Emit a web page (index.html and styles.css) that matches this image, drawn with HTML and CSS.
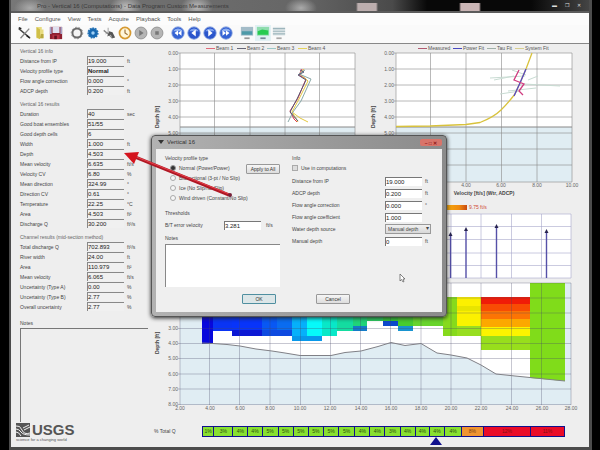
FILE: index.html
```html
<!DOCTYPE html>
<html lang="en">
<head>
<meta charset="utf-8">
<title>Vertical 16</title>
<link rel="stylesheet" href="styles.css">
</head>
<body>
<div class="window">
  <header class="titlebar">
    <span class="title">Pro - Vertical 16 (Computations) - Data Program Custom Measurements</span>
    <span class="caption"><button aria-label="Minimize">&#9644;</button><button aria-label="Restore">&#10064;</button><button aria-label="Close">&#10005;</button></span>
  </header>
  <nav class="menu">
    <a href="#">File</a><a href="#">Configure</a><a href="#">View</a><a href="#">Tests</a><a href="#">Acquire</a><a href="#">Playback</a><a href="#">Tools</a><a href="#">Help</a>
  </nav>
  <div class="toolbar">
    <div class="group">
      <button aria-label="Wizard"><svg viewBox="0 0 16 16"><path d="M2 3l12 10" stroke="#444" stroke-width="1.5"/><path d="M14 3L4 14" stroke="#888" stroke-width="1.6"/><path d="M2 2l3 1M11 11l4 3" stroke="#222" stroke-width="1.6"/></svg></button>
      <button aria-label="Open"><svg viewBox="0 0 16 16"><path d="M4 1h6v3h2v10H4z" fill="#e8dc80"/><path d="M4 1l4 3v11l-4-2z" fill="#d0bf48"/><path d="M9 9h3v5H8z" fill="#b9a93f"/></svg></button>
      <button aria-label="Save"><svg viewBox="0 0 16 16"><path d="M1 1h14v14H1z" fill="#8e1f30"/><path d="M4 1h8v7H4z" fill="#dfe0f0"/><path d="M1 1h2v8H1zM13 1h2v8h-2z" fill="#a8a4c8"/><path d="M4 10h8v5H4z" fill="#b83346"/><path d="M6 11h3v4H6z" fill="#601020"/></svg></button>
    </div>
    <div class="group">
      <button aria-label="Settings"><svg viewBox="0 0 16 16"><circle cx="8" cy="8" r="5.2" fill="#f4f4f4" stroke="#6a6a6a" stroke-width="2.2"/><circle cx="8" cy="8" r="6.6" fill="none" stroke="#888" stroke-width="1" stroke-dasharray="2 2"/></svg></button>
      <button aria-label="Instrument"><svg viewBox="0 0 16 16"><circle cx="8" cy="8" r="5.4" fill="#1768b0" stroke="#2472b5" stroke-width="2" stroke-dasharray="2 1"/><circle cx="8" cy="8" r="2" fill="#9fd0f5"/></svg></button>
      <button aria-label="Calibrate"><svg viewBox="0 0 16 16"><path d="M2 5l5 4 5 5" stroke="#888" stroke-width="1.5" fill="none"/><path d="M8 6l4 1 3 6-3 1-2-4-4 2z" fill="#555"/><path d="M7 2v5M4 9l3-2" stroke="#9a9a9a"/></svg></button>
      <button aria-label="Clock"><svg viewBox="0 0 16 16"><circle cx="8" cy="8" r="6.3" fill="#fff6da" stroke="#d69a32" stroke-width="2"/><path d="M8 4v4l3 2" stroke="#997038" fill="none" stroke-width="1.3"/></svg></button>
      <button aria-label="Start"><svg viewBox="0 0 16 16"><circle cx="8" cy="8" r="6.8" fill="#b5b5b5" stroke="#909090"/><path d="M6 4.500l5 3.500-5 3.500z" fill="#777"/></svg></button>
      <button aria-label="Stop"><svg viewBox="0 0 16 16"><circle cx="8" cy="8" r="6.800" fill="#b5b5b5" stroke="#909090"/><path d="M6 6h4v4H6z" fill="#777"/></svg></button>
    </div>
    <div class="group">
      <button aria-label="First"><svg viewBox="0 0 16 16"><circle cx="8" cy="8" r="7" fill="#3563d4" stroke="#6f8fd8"/><path d="M2.500 6a6 5 0 0 1 11 0z" fill="#8fb0f2"/><path d="M8 5v6L4 8zM12 5v6L8 8z" fill="#fff"/></svg></button>
      <button aria-label="Previous"><svg viewBox="0 0 16 16"><circle cx="8" cy="8" r="7" fill="#2a55cc" stroke="#6f8fd8"/><path d="M2.500 6a6 5 0 0 1 11 0z" fill="#7fa2ee"/><path d="M10 4v8L5 8z" fill="#fff"/></svg></button>
      <button aria-label="Next"><svg viewBox="0 0 16 16"><circle cx="8" cy="8" r="7" fill="#2a55cc" stroke="#6f8fd8"/><path d="M2.500 6a6 5 0 0 1 11 0z" fill="#7fa2ee"/><path d="M6 4v8l5-4z" fill="#fff"/></svg></button>
      <button aria-label="Last"><svg viewBox="0 0 16 16"><circle cx="8" cy="8" r="7" fill="#3563d4" stroke="#6f8fd8"/><path d="M2.500 6a6 5 0 0 1 11 0z" fill="#8fb0f2"/><path d="M4 5v6l4-3zM8 5v6l4-3z" fill="#fff"/></svg></button>
    </div>
    <div class="group">
      <button aria-label="Profile view"><svg viewBox="0 0 16 16"><path d="M1 1h14v10H1z" fill="#a3bcc8"/><path d="M2 6h12v4H2z" fill="#4e9aa8"/><path d="M5 13h6v2H5z" fill="#999"/></svg></button>
      <button class="on" aria-label="Contour view"><svg viewBox="0 0 16 16"><path d="M1 1h14v10H1z" fill="#8fdcae"/><path d="M2 6l5-2 7 1v5H2z" fill="#27cb50"/><path d="M5 13h6v2H5z" fill="#789"/></svg></button>
      <button aria-label="Table view"><svg viewBox="0 0 16 16"><path d="M1 1h14v10H1z" fill="#e1e8ea"/><path d="M1 3h14M1 6h14M1 9h14" stroke="#9db5bc" stroke-width="1.400"/><path d="M5 13h6v2H5z" fill="#aaa"/></svg></button>
    </div>
  </div>
  <main class="main">
    <aside class="side">
      <h2>Vertical 16 info</h2>
      <div class="rows">
        <label for="a1">Distance from IP</label><input id="a1" value="19.000"><span>ft</span>
        <label for="a2">Velocity profile type</label><input id="a2" class="strong" value="Normal"><span></span>
        <label for="a3">Flow angle correction</label><input id="a3" value="0.000"><span>°</span>
        <label for="a4">ADCP depth</label><input id="a4" value="0.200"><span>ft</span>
      </div>
      <h2>Vertical 16 results</h2>
      <div class="rows">
        <label for="b1">Duration</label><input id="b1" value="40"><span>sec</span>
        <label for="b2">Good boat ensembles</label><input id="b2" value="51/55"><span></span>
        <label for="b3">Good depth cells</label><input id="b3" value="6"><span></span>
        <label for="b4">Width</label><input id="b4" value="1.000"><span>ft</span>
        <label for="b5">Depth</label><input id="b5" value="4.503"><span></span>
        <label for="b6">Mean velocity</label><input id="b6" value="6.635"><span>ft/s</span>
        <label for="b7">Velocity CV</label><input id="b7" value="6.80"><span>%</span>
        <label for="b8">Mean direction</label><input id="b8" value="324.99"><span>°</span>
        <label for="b9">Direction CV</label><input id="b9" value="0.61"><span>°</span>
        <label for="b10">Temperature</label><input id="b10" value="22.25"><span>°C</span>
        <label for="b11">Area</label><input id="b11" value="4.503"><span>ft²</span>
        <label for="b12">Discharge Q</label><input id="b12" value="30.200"><span>ft³/s</span>
      </div>
      <h2>Channel results (mid-section method)</h2>
      <div class="rows">
        <label for="c1">Total discharge Q</label><input id="c1" value="702.893"><span>ft³/s</span>
        <label for="c2">River width</label><input id="c2" value="24.00"><span>ft</span>
        <label for="c3">Area</label><input id="c3" value="110.979"><span>ft²</span>
        <label for="c4">Mean velocity</label><input id="c4" value="6.065"><span>ft/s</span>
        <label for="c5">Uncertainty (Type A)</label><input id="c5" value="0.00"><span>%</span>
        <label for="c6">Uncertainty (Type B)</label><input id="c6" value="2.77"><span>%</span>
        <label for="c7">Overall uncertainty</label><input id="c7" value="2.77"><span>%</span>
      </div>
      <label class="notes-label" for="notes">Notes</label>
      <textarea id="notes" class="notes"></textarea>
      <div class="logo">
        <svg viewBox="0 0 14 14" class="mark"><path d="M0 0h14v14H0z" fill="#555"/><path d="M0 3q4-1 6 4t8 3M0 6q3 0 5 3t9 3M0 9q3 0 5 4" fill="none" stroke="#eee"/><path d="M7 5l6-3M8 7l6-3" stroke="#eee"/></svg>
        <b>USGS</b>
        <small>science for a changing world</small>
      </div>
    </aside>

    <section class="charts">
      <div class="pair">
        <svg viewBox="150 44 220 154">
          <path d="M180 53h175v129H180z" fill="#fff"/><path d="M180 127h175v55H180z" fill="#e0edf3"/>
          <path class="grid" d="M180 53v129M214.500 53v129M250 53v129M285 53v129M319.500 53v129M355 53v129M178 53h177M178 69h177M178 85h177M178 101h177M178 117h177M178 133h177M178 149h177M178 165h177M178 182h177"/>
          <path d="M180 127h175" stroke="#888"/>
          <g class="num end"><text x="178" y="55">0.00</text><text x="178" y="71">1.00</text><text x="178" y="87">2.00</text><text x="178" y="103">3.00</text><text x="178" y="119">4.00</text><text x="178" y="135">5.00</text></g>
          <text class="axis" transform="translate(159 117) rotate(-90)">Depth [ft]</text>
          <g class="legend"><path d="M206 48.500h9" stroke="#e06a78"/><text x="216" y="50">Beam 1</text><path d="M237 48.500h9" stroke="#667"/><text x="247" y="50">Beam 2</text><path d="M267 48.500h9" stroke="#9cc8c8"/><text x="277" y="50">Beam 3</text><path d="M298 48.500h9" stroke="#e4d35c"/><text x="308" y="50">Beam 4</text></g>
          <g class="line"><path d="M302 69l-3 6 7 4-8 19-8 13 4 8 3 3" stroke="#e0364c"/><path d="M304 69l-4 5 8 7-9 18-7 13 6 10" stroke="#e4c840"/><path d="M292 112l8 6 8 4" stroke="#e4c840"/><path d="M305 70l-6 4 12 5-10 22-8 11-5 10" stroke="#88a8a8"/><path d="M300 70l4 2-6 3 8 5-9 19-7 13 8 9" stroke="#555a75"/></g>
        </svg>
        <svg viewBox="370 44 219 154">
          <path d="M396 53h176v129H396z" fill="#fff"/><path d="M396 127h176v55H396z" fill="#e0edf3"/>
          <path class="grid" d="M396 53v129M430.500 53v129M466 53v129M501.500 53v129M537 53v129M572 53v129M394 53h178M394 69h178M394 85h178M394 101h178M394 117h178M394 133h178M394 149h178M394 165h178M394 182h178"/>
          <path d="M396 127h176" stroke="#888"/>
          <g class="num end"><text x="394" y="55">0.00</text><text x="394" y="71">1.00</text><text x="394" y="87">2.00</text><text x="394" y="103">3.00</text><text x="394" y="119">4.00</text><text x="394" y="135">5.00</text></g>
          <g class="num mid"><text x="466" y="187">4.00</text><text x="501" y="187">6.00</text><text x="537" y="187">8.00</text><text x="572" y="187">10.00</text></g>
          <text class="axis" transform="translate(375 117) rotate(-90)">Depth [ft]</text>
          <text class="axis" x="484" y="195">Velocity [ft/s] (Wtr, ADCP)</text>
          <g class="legend"><path d="M418 48.500h9" stroke="#b05a70"/><text x="428" y="50">Measured</text><path d="M453 48.500h9" stroke="#4848c0"/><text x="463" y="50">Power Fit</text><path d="M487 48.500h9" stroke="#a0b0a8"/><text x="497" y="50">Tau Fit</text><path d="M515 48.500h9" stroke="#d8cf90"/><text x="525" y="50">System Fit</text></g>
          <path d="M490 78l35-2M494 80l20-4M508 91l28-3M512 70l14 5M524 84l36 2M528 80l10-4M500 94l20-3" stroke="#c8dbd2" fill="none"/>
          <path d="M396 126.500L430 126 466 124.500 480 122.500Q494 117 501 110 508 103 515 94 521 81 526 69L532 53" fill="none" stroke="#d8c23c" stroke-width="1.300"/>
          <path d="M514 96l6-13 6-14" fill="none" stroke="#5548c8" stroke-width="1.300"/><path d="M519 70l-5 10 10 4-5 7 4 4" fill="none" stroke="#d03c80" stroke-width="1.300"/>
        </svg>
      </div>
      <svg viewBox="150 198 439 14">
        <defs><linearGradient id="scale"><stop offset="0" stop-color="#0010e0"/><stop offset=".3" stop-color="#00e0ff"/><stop offset=".55" stop-color="#60d820"/><stop offset=".75" stop-color="#fff000"/><stop offset=".96" stop-color="#f08a10"/><stop offset="1" stop-color="#c84a10"/></linearGradient></defs>
        <path d="M270 205h197v5H270z" fill="url(#scale)"/><text class="scale" x="469" y="209">9.75 ft/s</text>
      </svg>
      <svg viewBox="150 212 439 68">
        <path d="M180 214h391v64H180z" fill="#fff"/>
        <path class="grid blue" d="M180 214v64M240 214v64M300 214v64M360 214v64M421 214v64M451 214v64M481 214v64M511.500 214v64M541.500 214v64M571 214v64M180 214h391M180 226.500h391M180 239.500h391M180 253h391M180 265.500h391M180 278h391"/>
        <g stroke="#5550a8" stroke-width="1.400"><path d="M450.500 235v43M466 230v48M496.500 227v51M546.500 232v46"/></g>
        <path d="M448.500 236l2-4 2 4zM464 231l2-4 2 4zM494.500 228l2-4 2 4zM544.500 233l2-4 2 4z" fill="#282450"/>
      </svg>
      <svg viewBox="150 280 439 134">
        <path d="M180 283h391v122H180z" fill="#e0edf3"/>
        <path d="M202 283V343l11 .5 14 1 13 1.500 16 3 16 2 13 2 15 2.500h31l14-3 16-1.500 17-4.500 13-4 14 3 16-2 16 9.500 14 2 16 3 14 7 15 9 19 2 15 1.500 35 3.500V283z" fill="#fff"/>
        <g shape-rendering="crispEdges">
          <path d="M202 297h11v47h-11z" fill="#0808dc"/><path d="M213 297h19v34h-19z" fill="#0a34f4"/><path d="M232 297h30v39h-30z" fill="#0834fa"/><path d="M232 330h30v6h-30z" fill="#0c18d4"/>
          <path d="M262 297h15v39h-15z" fill="#0858f4"/><path d="M277 297h15v39h-15z" fill="#0a6cf0"/><path d="M262 330h30v6h-30z" fill="#0e4ae0"/>
          <path d="M292 297h15v44h-15z" fill="#06b0fa"/><path d="M307 297h15v39h-15z" fill="#06fafa"/><path d="M292 336h30v5h-30z" fill="#0898ea"/>
          <path d="M322 297h15v39h-15z" fill="#08e8c8"/><path d="M337 297h16v34h-16z" fill="#14dca0"/><path d="M353 297h14v29h-14z" fill="#20d478"/><path d="M353 326h14v5h-14z" fill="#147cc8"/>
          <path d="M367 297h16v24h-16z" fill="#2ccc60"/><path d="M383 297h15v24h-15z" fill="#34c838"/><path d="M383 321h15v5h-15z" fill="#0c48cc"/><path d="M398 297h15v29h-15z" fill="#48cc30"/><path d="M398 326h15v5h-15z" fill="#1894d0"/>
          <path d="M413 297h30v29h-30z" fill="#68d42c"/><path d="M443 297h14v39h-14z" fill="#86da1c"/>
          <path d="M457 297h24v29h-24z" fill="#fcf000"/><path d="M457 306h24v5h-24z" fill="#e8e400"/><path d="M457 320h24v6h-24z" fill="#f8f400"/><path d="M457 326h24v10h-24z" fill="#98de20"/>
          <path d="M481 297h49v9h-49z" fill="#f01c08"/><path d="M481 304h49v7h-49z" fill="#f84c04"/><path d="M481 311h49v8h-49z" fill="#fc7404"/><path d="M481 319h49v8h-49z" fill="#fca800"/><path d="M481 327h49v9h-49z" fill="#fcf400"/><path d="M481 336h49v14h-49z" fill="#98de1c"/>
        </g>
        <path d="M530 283h35v98l-35-3z" fill="#80dc1a"/>
        <path class="grid over" d="M180 283v122M209.500 283v122M239.500 283v122M270 283v122M300.500 283v122M330.500 283v122M360.500 283v122M390.500 283v122M421 283v122M451 283v122M481 283v122M511.500 283v122M541.500 283v122M571 283v122M178 283h393M178 298h393M178 313h393M178 328.500h393M178 343.500h393M178 358.500h393M178 374h393M178 389h393M178 404.500h393"/>
        <path d="M202 343l11 .5 14 1 13 1.500 16 3 16 2 13 2 15 2.500h31l14-3 16-1.500 17-4.500 13-4 14 3 16-2 16 9.500 14 2 16 3 14 7 15 9 19 2 15 1.500 35 3.500" fill="none" stroke="#808086"/>
        <g class="num end"><text x="178" y="330">3.00</text><text x="178" y="345">4.00</text><text x="178" y="360">5.00</text><text x="178" y="376">6.00</text><text x="178" y="391">7.00</text><text x="178" y="406">8.00</text></g>
        <g class="num mid"><text x="180" y="410">2.00</text><text x="210" y="410">4.00</text><text x="240" y="410">6.00</text><text x="270" y="410">8.00</text><text x="300" y="410">10.00</text><text x="330" y="410">12.00</text><text x="361" y="410">14.00</text><text x="391" y="410">16.00</text><text x="421" y="410">18.00</text><text x="451" y="410">20.00</text><text x="481" y="410">22.00</text><text x="512" y="410">24.00</text><text x="542" y="410">26.00</text><text x="571" y="410">28.00</text></g>
        <text class="axis" transform="translate(159 343) rotate(-90)">Depth [ft]</text>
      </svg>
      <div class="total">
        <span class="total-label">% Total Q</span>
        <ol class="cells">
          <li style="flex-grow:11">1%</li><li style="flex-grow:19">3%</li><li style="flex-grow:15">4%</li><li style="flex-grow:14">4%</li><li style="flex-grow:16">5%</li><li style="flex-grow:15">5%</li><li style="flex-grow:15">5%</li><li style="flex-grow:15">5%</li><li style="flex-grow:15">5%</li><li style="flex-grow:16">5%</li><li style="flex-grow:15">4%</li><li style="flex-grow:15">4%</li><li style="flex-grow:15">3%</li><li style="flex-grow:15">4%</li><li style="flex-grow:14">4%</li><li style="flex-grow:15">4%</li><li style="flex-grow:17">4%</li><li class="warn" style="flex-grow:22">8%</li><li class="bad" style="flex-grow:49">12%</li><li class="bad" style="flex-grow:35">11%</li>
        </ol>
      </div>
      <svg viewBox="150 437 439 9"><path d="M436 437l6 8h-12z" fill="#10108c"/></svg>
    </section>

    <form class="dialog">
      <div class="dialog-title"><span><svg viewBox="0 0 6 6" class="appicon"><path d="M0 1l3 4 3-4z" fill="#333"/></svg>Vertical 16</span><button type="button" class="close" aria-label="Close">&#8211; &#9633; &#10005;</button></div>
      <div class="dialog-body">
        <div class="left">
          <h3>Velocity profile type</h3>
          <div class="profile">
            <div class="radios">
              <label><input type="radio" name="p" checked>Normal (Power/Power)</label>
              <label><input type="radio" name="p">Bidirectional (3-pt / No Slip)</label>
              <label><input type="radio" name="p">Ice (No Slip/No Slip)</label>
              <label><input type="radio" name="p">Wind driven (Constant/No Slip)</label>
            </div>
            <button type="button" class="btn">Apply to All</button>
          </div>
          <h3 class="gap">Thresholds</h3>
          <div class="threshold"><label for="t1">B/T error velocity</label><input id="t1" value="3.281"><span>ft/s</span></div>
          <label class="dnotes-label" for="dn">Notes</label>
          <textarea id="dn" class="dnotes"></textarea>
        </div>
        <div class="right">
          <h3>Info</h3>
          <label class="check"><input type="checkbox" checked disabled>Use in computations</label>
          <div class="fields">
            <label for="d1">Distance from IP</label><input id="d1" value="19.000"><span>ft</span>
            <label for="d2">ADCP depth</label><input id="d2" value="0.200"><span>ft</span>
            <label for="d3">Flow angle correction</label><input id="d3" value="0.000"><span>°</span>
            <label for="d4">Flow angle coefficient</label><input id="d4" value="1.000"><span></span>
            <label for="d5">Water depth source</label><div class="pick"><select id="d5"><option>Manual depth</option></select></div>
            <label for="d6">Manual depth</label><input id="d6" value="0"><span>ft</span>
          </div>
        </div>
        <div class="actions"><button type="button" class="btn ok">OK</button><button type="button" class="btn">Cancel</button></div>
      </div>
    </form>
    <svg class="pointer" viewBox="0 0 110 50"><path d="M12 6l94 38" stroke="#b01824" stroke-width="3"/><path d="M11 5l95 38" stroke="#e8404a"/><path d="M1 2l15-1-5 12z" fill="#d4141e"/><circle cx="107" cy="44" r="2" fill="#782038"/></svg>
    <svg class="cursor" viewBox="0 0 6 10"><path d="M1 1v7l1.500-1.500L4 9l1-.500L4 6h2z" fill="#fff" stroke="#555" stroke-width=".7"/></svg>
  </main>
</div>
</body>
</html>
```
FILE: styles.css
```css
* { box-sizing: border-box; }
body {
  margin: 0;
  padding: 0 8px 0 9px;
  background: #000;
  color: #444;
  font: 5px/10px "Liberation Sans", Arial, sans-serif;
}
h2, h3, ol { margin: 0; padding: 0; font-weight: 400; font-size: 5px; }
button, input, select, textarea { font: inherit; color: inherit; margin: 0; padding: 0; border: 0; border-radius: 0; min-width: 0; }
svg { display: block; width: 100%; }

.window {
  display: flex;
  flex-direction: column;
  min-height: 100vh;
  background: #eee;
  border: solid #4c4c4c;
  border-width: 0 3px 3px 2px;
}
.titlebar {
  display: flex;
  justify-content: space-between;
  height: 13px;
  padding: 0 8px 0 26px;
  border-bottom: 2px solid #5c5c5c;
  line-height: 12px;
  background:
    radial-gradient(ellipse 16px 10px at 19px 8px, #aaa, transparent),
    radial-gradient(ellipse 16px 12px at 115px 7px, #bbb, transparent),
    radial-gradient(ellipse 16px 12px at 186px 7px, #bbb, transparent),
    radial-gradient(ellipse 16px 10px at 290px 8px, #aaa, transparent),
    linear-gradient(90deg, transparent 345px, #bcaeae 347px 365px, transparent 367px, transparent 448px, #c9b4b4 450px 468px, transparent 470px) 0 3px no-repeat,
    linear-gradient(90deg, #777, #666 50%, #4a4a4a 66%, #080808 72%, #080808 90%, #444);
}
.title { font-size: 6px; color: #3a3a3a; }
.caption { display: flex; gap: 8px; color: #ddd; font-size: 5px; line-height: 9px; }
.caption button { background: none; }

.menu { display: flex; gap: 7px; padding: 1px 7px 0; background: #fcfcfc; font-size: 6px; line-height: 11px; }
.menu a { color: #555; text-decoration: none; }
.toolbar { display: flex; gap: 5px; padding: 0 5px 2px; background: #fafafa; border-bottom: 1px solid #888; }
.group { display: flex; }
.toolbar button { width: 16px; height: 16px; padding: 1px; background: none; }
.toolbar .on { background: #e2f1f4; }

.main { position: relative; display: flex; flex: 1; }
.side { position: relative; display: flex; flex-direction: column; flex: 0 0 139px; padding: 2px 2px 6px 9px; }
.side h2 { color: #666; line-height: 10px; }
.rows + h2 { margin-top: 3px; }
.rows { display: grid; grid-template-columns: 67px 37px 1fr; grid-auto-rows: 10px; }
.rows input { height: 9px; background: #f0f0f0; border: solid #888; border-width: 1px 0 0 1px; font-size: 6px; color: #222; }
.rows .strong { font-weight: 700; }
.rows span { padding-left: 3px; }
.notes-label { margin-top: 6px; }
.notes { flex: 1; resize: none; background: #eee; border: solid #777; border-width: 1px 0 0 1px; }
.logo { position: absolute; left: 5px; bottom: 5px; display: grid; grid-template-columns: 14px auto; column-gap: 2px; color: #555; background: #eee; }
.logo b { font-size: 15px; line-height: 16px; }
.logo .mark { height: 14px; margin-top: 1px; }
.logo small { grid-column: 1 / 3; font-size: 4px; line-height: 4px; }

.charts { flex: 1; min-width: 0; }
.pair { display: grid; grid-template-columns: 220fr 219fr; }
.grid { fill: none; stroke: #8a8a8a; stroke-opacity: .6; stroke-width: 1; }
.grid.blue { stroke: #a8a8cc; }
.grid.over { stroke-opacity: .3; stroke: #446; }
.line { fill: none; }
.num { font-size: 5px; fill: #666; }
.end { text-anchor: end; }
.mid { text-anchor: middle; }
.axis { font-size: 5px; font-weight: 700; fill: #444; text-anchor: middle; }
.legend { font-size: 5px; fill: #555; }
.scale { font-size: 5px; fill: #d04830; }
.total { display: flex; margin-top: 12px; padding-right: 24px; }
.total-label { flex: 0 0 52px; padding-left: 4px; line-height: 11px; }
.cells { display: flex; flex: 1; list-style: none; border: solid #10108c; border-width: 1px 0 1px 1px; color: #2a4a10; line-height: 9px; }
.cells li { flex: 1 1 0; background: #88e030; border-right: 1px solid #10108c; text-align: center; overflow: hidden; }
.cells .warn { background: #f09430; color: #7a4010; }
.cells .bad { background: #ea0c28; color: #801010; }

.dialog {
  position: absolute;
  left: 140px;
  top: 91px;
  width: 296px;
  padding: 0 4px 4px;
  border: 1px solid #555;
  border-radius: 4px;
  background: linear-gradient(90deg, #b2b2b2, #999 60%, #8b8b8b);
  box-shadow: 0 1px 4px #222;
}
.dialog-title { display: flex; justify-content: space-between; height: 13px; padding-left: 2px; font-size: 6px; line-height: 12px; color: #333; }
.dialog-title span { display: flex; gap: 3px; }
.appicon { width: 6px; height: 6px; margin-top: 3px; }
.close { width: 22px; height: 7px; margin-top: 3px; border-radius: 2px; background: #d8746a; color: #901818; font-size: 5px; line-height: 6px; font-weight: 700; }
.dialog-body { display: grid; grid-template-columns: 115px 140px; column-gap: 12px; padding: 4px 9px; background: #efefef; }
.dialog h3 { line-height: 10px; }
.left, .right { display: flex; flex-direction: column; }
.profile { display: flex; justify-content: space-between; }
.radios { display: grid; grid-auto-rows: 10px; padding-left: 5px; white-space: nowrap; }
.radios label, .check { display: flex; align-items: center; gap: 3px; }
.radios input { appearance: none; width: 6px; height: 6px; border: 1px solid #aaa; border-radius: 3px; background: #f6f6f6; }
.radios input:checked { background: #333; border: 1px solid #999; }
.btn { height: 10px; width: 34px; border: 1px solid #999; border-radius: 1px; background: linear-gradient(#f6f6f6, #ddd); line-height: 8px; color: #333; }
.profile .btn { margin-top: 1px; margin-left: -30px; }
.dialog .gap { margin-top: 5px; }
.threshold { display: flex; height: 12px; align-items: center; margin-top: 1px; }
.threshold label { flex: 0 0 59px; }
.threshold span { padding-left: 5px; }
.threshold input, .fields input { width: 37px; height: 9px; background: #fff; border: solid #777; border-width: 1px 0 0 1px; font-size: 6px; color: #222; }
.dnotes-label { margin-top: 2px; }
.dnotes { height: 43px; margin-top: 1px; resize: none; background: #fff; border: solid #888; border-width: 1px 0 0 1px; }
.check input { appearance: none; width: 6px; height: 6px; border: 1px solid #aaa; background: #ddd; }
.fields { display: grid; grid-template-columns: 93px 37px 1fr; grid-auto-rows: 12px; align-items: center; margin-top: 2px; }
.fields span { padding-left: 3px; }
.pick { grid-column: 2 / 4; position: relative; width: 46px; }
.pick::after { content: "\25BE"; position: absolute; right: 2px; top: 0; line-height: 9px; font-size: 6px; }
.pick select { display: block; appearance: none; width: 100%; height: 10px; padding-left: 2px; border: 1px solid #999; background: linear-gradient(#f0f0f0, #d8d8d8); line-height: 8px; }
.actions { grid-column: 1 / 3; display: flex; gap: 40px; padding: 7px 0 4px 77px; }
.actions .ok { border-color: #4f8fa0; background: #dce6e8; }

.pointer { position: absolute; left: 112px; top: 107px; width: 110px; height: 50px; }
.cursor { position: absolute; left: 388px; top: 229px; width: 6px; height: 10px; }
```
